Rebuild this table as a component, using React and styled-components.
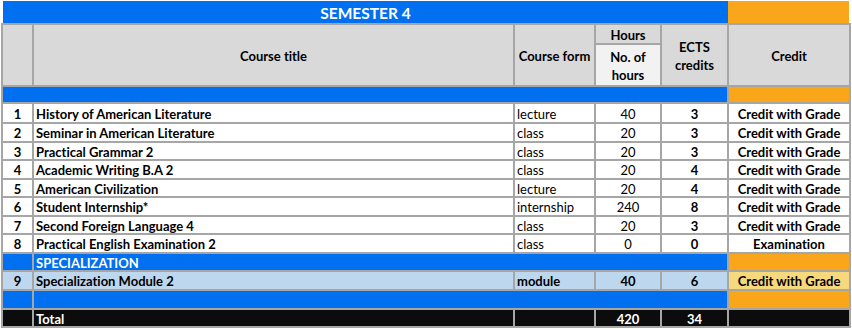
import React from "react";
import styled, { createGlobalStyle } from "styled-components";

const Global = createGlobalStyle`
  html, body { margin: 0; padding: 0; background: #ffffff; }
  body { font-family: Lato, "Open Sans", sans-serif; font-variant-ligatures: none; }
`;

const C = {
  blue: "#0070f0",
  orange: "#faa61a",
  head: "#d9d9d9",
  light: "#f2f2f2",
  line: "#a6a6a6",
  pale: "#bdd7ee",
  yellow: "#f6d97c",
  black: "#0c0c0c",
};

const Page = styled.div`
  padding-top: 1px;
  width: 852px;
`;

const TitleBar = styled.div`
  display: flex;
  margin-left: 3px;
  height: 22px;
`;

const TitleCell = styled.div`
  width: ${(p) => p.$w}px;
  background: ${(p) => p.$bg};
  color: #ffffff;
  font-weight: 700;
  font-size: 15.5px;
  padding-top: 1px;
  box-sizing: border-box;
  display: flex;
  align-items: center;
  justify-content: center;
`;

const Table = styled.div`
  margin-left: 1px;
  width: 846px;
  display: grid;
  grid-template-columns: 29px 479px 79px 64px 65px 120px;
  grid-template-rows: 18px 40px 15px 18px 17px 16px 17px 16px 17px 16px 17px 16px 17px 17px 16px;
  gap: 2px;
  padding: 2px;
  background: ${C.line};
`;

const Cell = styled.div`
  grid-column: span ${(p) => p.$span || 1};
  grid-row: span ${(p) => p.$rows || 1};
  background: ${(p) => p.$bg || "#ffffff"};
  color: ${(p) => p.$color || "#000000"};
  font-weight: ${(p) => (p.$bold ? 700 : 400)};
  font-size: 13px;
  line-height: 18px;
  display: flex;
  align-items: center;
  justify-content: ${(p) => (p.$align === "left" ? "flex-start" : "center")};
  text-align: center;
  padding: 1px 2px 0;
  white-space: nowrap;
  overflow: hidden;
`;

const rows = [
  ["1", "History of American Literature", "lecture", "40", "3", "Credit with Grade"],
  ["2", "Seminar in American Literature", "class", "20", "3", "Credit with Grade"],
  ["3", "Practical Grammar 2", "class", "20", "3", "Credit with Grade"],
  ["4", "Academic Writing B.A 2", "class", "20", "4", "Credit with Grade"],
  ["5", "American Civilization", "lecture", "20", "4", "Credit with Grade"],
  ["6", "Student Internship*", "internship", "240", "8", "Credit with Grade"],
  ["7", "Second Foreign Language 4", "class", "20", "3", "Credit with Grade"],
  ["8", "Practical English Examination 2", "class", "0", "0", "Examination"],
];

function CourseRow({ r, bg, credBg, allBold }) {
  return (
    <>
      <Cell $bg={bg} $bold>{r[0]}</Cell>
      <Cell $bg={bg} $bold $align="left">{r[1]}</Cell>
      <Cell $bg={bg} $bold={allBold} $align="left">{r[2]}</Cell>
      <Cell $bg={bg} $bold={allBold}>{r[3]}</Cell>
      <Cell $bg={bg} $bold>{r[4]}</Cell>
      <Cell $bg={credBg || bg} $bold>{r[5]}</Cell>
    </>
  );
}

export default function App() {
  return (
    <Page>
      <Global />
      <TitleBar>
        <TitleCell $w={725} $bg={C.blue}>SEMESTER 4</TitleCell>
        <TitleCell $w={121} $bg={C.orange} />
      </TitleBar>
      <Table>
        <Cell $bg={C.head} $rows={2} />
        <Cell $bg={C.head} $rows={2} $bold>Course title</Cell>
        <Cell $bg={C.head} $rows={2} $bold>Course form</Cell>
        <Cell $bg={C.head} $bold>Hours</Cell>
        <Cell $bg={C.head} $rows={2} $bold>ECTS<br />credits</Cell>
        <Cell $bg={C.head} $rows={2} $bold>Credit</Cell>
        <Cell $bg={C.light} $bold>No. of<br />hours</Cell>

        <Cell $bg={C.blue} $span={5} />
        <Cell $bg={C.orange} />

        {rows.map((r) => (
          <CourseRow key={r[0]} r={r} />
        ))}

        <Cell $bg={C.blue} />
        <Cell $bg={C.blue} $span={4} $bold $color="#ffffff" $align="left">SPECIALIZATION</Cell>
        <Cell $bg={C.orange} />

        <CourseRow
          r={["9", "Specialization Module 2", "module", "40", "6", "Credit with Grade"]}
          bg={C.pale}
          credBg={C.yellow}
          allBold
        />

        <Cell $bg={C.blue} />
        <Cell $bg={C.blue} $span={4} />
        <Cell $bg={C.orange} />

        <Cell $bg={C.black} />
        <Cell $bg={C.black} $bold $color="#ffffff" $align="left">Total</Cell>
        <Cell $bg={C.black} />
        <Cell $bg={C.black} $bold $color="#ffffff">420</Cell>
        <Cell $bg={C.black} $bold $color="#ffffff">34</Cell>
        <Cell $bg={C.black} />
      </Table>
    </Page>
  );
}
